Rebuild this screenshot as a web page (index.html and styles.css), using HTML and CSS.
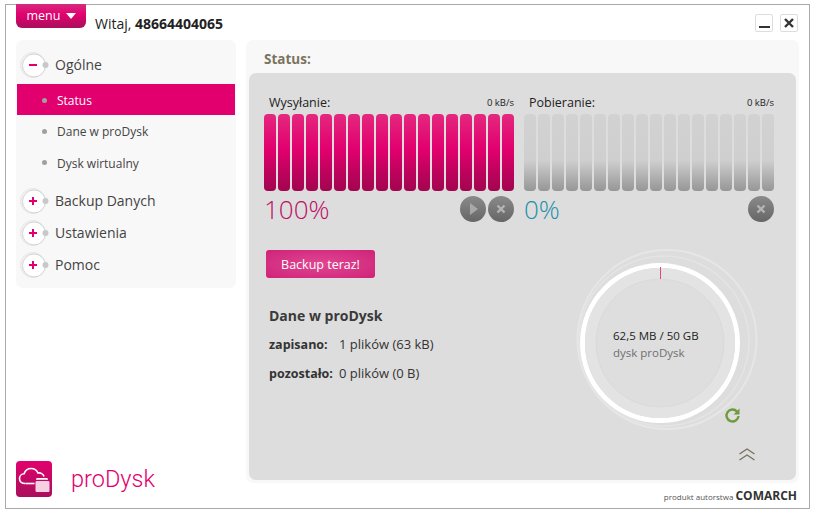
FILE: index.html
```html
<!DOCTYPE html>
<html lang="pl">
<head>
    <meta charset="UTF-8">
    <title>proDysk</title>
    <link rel="stylesheet" href="styles.css">
</head>
<body>
    <svg class="defs" width="0" height="0">
        <symbol id="node" viewBox="0 0 30 30">
            <circle cx="14" cy="15" r="12.5" fill="#f2f2f2" stroke="#e6e6e6"/>
            <circle cx="15" cy="15.5" r="11.5" fill="#fff" stroke="#d4d4d4"/>
            <circle cx="26.5" cy="15" r="3" fill="#c8c8c8"/>
        </symbol>
    </svg>

    <div class="window">
        <div class="topbar">
            <button class="menu-btn">menu <span class="caret"></span></button>
            <div class="hello">Witaj, <b>48664404065</b></div>
            <div class="win-btns">
                <div class="win-btn"><span class="min-mark"></span></div>
                <div class="win-btn close-btn">
                    <svg width="10" height="10" viewBox="0 0 10 10"><path d="M1 1l8 8M9 1l-8 8" stroke="#333" stroke-width="2.4"/></svg>
                </div>
            </div>
        </div>

        <div class="content">
            <div class="left">
                <div class="sidebar">
                    <div class="group">
                        <svg class="node"><use href="#node"/></svg>
                        <span class="sign minus"></span>
                        Ogólne
                    </div>
                    <div class="sub active">Status</div>
                    <div class="sub">Dane w proDysk</div>
                    <div class="sub">Dysk wirtualny</div>
                    <div class="group first-closed">
                        <svg class="node"><use href="#node"/></svg>
                        <span class="sign plus"></span>
                        Backup Danych
                    </div>
                    <div class="group">
                        <svg class="node"><use href="#node"/></svg>
                        <span class="sign plus"></span>
                        Ustawienia
                    </div>
                    <div class="group">
                        <svg class="node"><use href="#node"/></svg>
                        <span class="sign plus"></span>
                        Pomoc
                    </div>
                </div>

                <div class="brand">
                    <div class="logo">
                        <svg width="36" height="36" viewBox="0 0 36 36">
                            <path d="M9.500 22.500c-4 0-6-2-6-5 0-2.600 2-4.600 4.600-4.700 1-3.300 3.700-5.300 7-5.300 3.200 0 5.700 1.800 6.900 4.500 2.600-.4 5.300.9 6 3.500" fill="none" stroke="#fff" stroke-width="1.600"/>
                            <path d="M9.500 22.500h9" stroke="#fff" stroke-width="1.600"/>
                            <path d="M21 20h11c1 0 1.500.5 1.500 1.500v8c0 1-.5 1.500-1.500 1.500h-11c-1 0-1.500-.5-1.500-1.500v-8c0-1 .5-1.500 1.500-1.500z" fill="#f6cfe2"/>
                            <path d="M21.500 17h9c1 0 1.500.5 1.500 1.800h-12c0-1.300.5-1.800 1.500-1.800z" fill="#fff"/>
                        </svg>
                    </div>
                    <span class="brand-name">proDysk</span>
                </div>
            </div>

            <div class="main">
                <div class="panel">
                    <div class="panel-title">Status:</div>
                    <div class="inner">
                        <div class="meters">
                            <div class="meter">
                                <div class="meter-head"><span>Wysyłanie:</span><small>0 kB/s</small></div>
                                <div class="bars on">
                                    <i></i><i></i><i></i><i></i><i></i><i></i><i></i><i></i><i></i>
                                    <i></i><i></i><i></i><i></i><i></i><i></i><i></i><i></i><i></i>
                                </div>
                                <div class="meter-foot">
                                    <span class="pct pink">100%</span>
                                    <div class="round-btns">
                                        <div class="round-btn"><svg width="26" height="26" viewBox="0 0 26 26"><path d="M10 7l8 6-8 6z" fill="#a8a8a8"/></svg></div>
                                        <div class="round-btn"><svg width="26" height="26" viewBox="0 0 26 26"><path d="M9.500 9.500l7 7M16.500 9.500l-7 7" stroke="#b4b4b4" stroke-width="2.400"/></svg></div>
                                    </div>
                                </div>
                            </div>
                            <div class="meter">
                                <div class="meter-head"><span>Pobieranie:</span><small>0 kB/s</small></div>
                                <div class="bars">
                                    <i></i><i></i><i></i><i></i><i></i><i></i><i></i><i></i><i></i>
                                    <i></i><i></i><i></i><i></i><i></i><i></i><i></i><i></i><i></i>
                                </div>
                                <div class="meter-foot">
                                    <span class="pct teal">0%</span>
                                    <div class="round-btns">
                                        <div class="round-btn"><svg width="26" height="26" viewBox="0 0 26 26"><path d="M9.500 9.500l7 7M16.500 9.500l-7 7" stroke="#b4b4b4" stroke-width="2.400"/></svg></div>
                                    </div>
                                </div>
                            </div>
                        </div>

                        <div class="lower">
                            <div class="info">
                                <button class="backup-btn">Backup teraz!</button>
                                <h2>Dane w proDysk</h2>
                                <div class="info-row"><b>zapisano:</b><span>1 plików (63 kB)</span></div>
                                <div class="info-row"><b>pozostało:</b><span>0 plików (0 B)</span></div>
                            </div>
                            <div class="disk">
                                <svg width="200" height="220" viewBox="0 0 200 220">
                                    <circle cx="97" cy="93.500" r="89.500" fill="none" stroke="#e6e6e6" stroke-width="2"/>
                                    <circle cx="94" cy="95" r="85" fill="none" stroke="#e4e4e4" stroke-width="1.500"/>
                                    <circle cx="90" cy="97" r="77.500" fill="none" stroke="#fff" stroke-width="5"/>
                                    <circle cx="90" cy="97" r="69.500" fill="none" stroke="#e3e3e3" stroke-width="11"/>
                                    <circle cx="90" cy="97" r="64" fill="#dedede" stroke="#dadada"/>
                                    <path d="M90.500 21v12" stroke="#e8428f" stroke-width="1"/>
                                    <path d="M168.500 170a6 6 0 1 1-1.500-4.500" fill="none" stroke="#6f9a3e" stroke-width="2.400"/>
                                    <path d="M169.500 162.500v6h-6z" fill="#6f9a3e"/>
                                    <path d="M169.500 208l7.500-5 7.500 5M169.500 214l7.500-5 7.500 5" fill="none" stroke="#77705f" stroke-width="1.300"/>
                                </svg>
                                <div class="disk-text">
                                    <div>62,5 MB / 50 GB</div>
                                    <div class="disk-name">dysk proDysk</div>
                                </div>
                            </div>
                        </div>
                    </div>
                </div>
                <div class="credit">produkt autorstwa <b>COMARCH</b></div>
            </div>
        </div>
    </div>
</body>
</html>
```

FILE: styles.css
```css
* {
    box-sizing: border-box;
}

body {
    margin: 0;
    background: #fff;
    color: #333;
    font-family: "Open Sans", "Noto Sans", sans-serif;
}

.defs {
    position: absolute;
}

.window {
    width: 805px;
    height: 505px;
    margin: 4px 0 0 5px;
    padding: 0 10px;
    border: 1px solid #aaa;
    background: #fff;
    display: flex;
    flex-direction: column;
}

/* top bar */
.topbar {
    height: 35px;
    flex: none;
    display: flex;
    align-items: flex-start;
}

.menu-btn {
    width: 70px;
    height: 24px;
    margin-top: -1px;
    padding: 0 0 1px;
    border: none;
    border-radius: 0 0 6px 6px;
    background: linear-gradient(#d62a80, #e2006e 45%, #a8105c);
    color: #fff;
    font-family: inherit;
    font-size: 12.5px;
}

.caret {
    display: inline-block;
    margin: 0 0 1px 2px;
    border-left: 5px solid transparent;
    border-right: 5px solid transparent;
    border-top: 6px solid #fff;
}

.hello {
    margin: 10px 0 0 9px;
    font-size: 14px;
    line-height: 18px;
    color: #222;
}

.win-btns {
    margin: 9px 1px 0 auto;
    display: flex;
    gap: 7px;
}

.win-btn {
    width: 18px;
    height: 18px;
    border: 1px solid #ddd;
    border-radius: 2px;
    background: #fff;
    display: flex;
    align-items: flex-end;
    justify-content: center;
}

.close-btn {
    align-items: center;
}

.min-mark {
    width: 11px;
    height: 2px;
    margin-bottom: 3px;
    background: #333;
}

.content {
    flex: 1;
    display: flex;
    gap: 10px;
}

/* left column */
.left {
    width: 220px;
    display: flex;
    flex-direction: column;
}

.sidebar {
    height: 248px;
    padding: 9px 1px 0;
    border-radius: 7px;
    background: #f8f8f8;
}

.group {
    position: relative;
    height: 32px;
    padding-left: 38px;
    font-size: 14px;
    line-height: 32px;
    color: #444;
}

.first-closed {
    margin-top: 7px;
}

.node {
    position: absolute;
    left: 2px;
    top: 1px;
    width: 30px;
    height: 30px;
}

.sign {
    position: absolute;
    left: 12px;
    top: 15px;
    width: 8px;
    height: 2px;
    background: #e2006e;
}

.plus::after {
    content: "";
    position: absolute;
    left: 3px;
    top: -3px;
    width: 2px;
    height: 8px;
    background: #e2006e;
}

.sub {
    position: relative;
    height: 31.33px;
    padding-left: 40px;
    font-size: 12px;
    line-height: 33px;
    color: #444;
}

.group + .sub {
    margin-top: 3px;
}

.sub::before {
    content: "";
    position: absolute;
    left: 25px;
    top: 13.5px;
    width: 5px;
    height: 5px;
    border-radius: 50%;
    background: #a0a0a0;
}

.sub.active {
    background: #e2006e;
    color: #fff;
}

.brand {
    margin-top: auto;
    margin-bottom: 11px;
    display: flex;
    align-items: center;
    gap: 19px;
}

.logo {
    width: 36px;
    height: 36px;
    border-radius: 4px;
    background: linear-gradient(#e2006e, #a8105c);
}

.logo svg {
    display: block;
}

.brand-name {
    font-family: Roboto, "Open Sans", sans-serif;
    font-weight: 300;
    font-size: 23.5px;
    color: #e2006e;
}

/* main column */
.main {
    width: 553px;
    display: flex;
    flex-direction: column;
}

.panel {
    height: 443px;
    padding: 0 3px 3px;
    border-radius: 7px;
    background: #f8f8f8;
    display: flex;
    flex-direction: column;
}

.panel-title {
    height: 33px;
    padding: 9px 0 0 15px;
    font-size: 13.5px;
    font-weight: 700;
    line-height: 20px;
    color: #7b7360;
}

.inner {
    flex: 1;
    padding: 21px 22px 0 15px;
    border-radius: 7px;
    background: #ddd;
}

.meters {
    display: flex;
    gap: 10px;
}

.meter {
    width: 250px;
}

.meter-head {
    height: 20px;
    padding: 0 0 4px 5px;
    display: flex;
    justify-content: space-between;
    align-items: center;
    font-size: 12.5px;
    color: #222;
}

.meter-head small {
    font-size: 9.5px;
}

.bars {
    display: flex;
    gap: 2px;
    height: 77px;
}

.bars i {
    width: 12px;
    border-radius: 4px;
    background: linear-gradient(#d2d2d2, #cfcfcf 60%, #969696);
}

.bars.on i {
    background: linear-gradient(#e4287f, #e2006e 45%, #a1054f);
}

.meter-foot {
    margin-top: 5px;
    display: flex;
    justify-content: space-between;
    align-items: flex-start;
}

.pct {
    font-size: 26px;
    font-weight: 300;
    line-height: 26px;
}

.pink {
    color: #bd0e66;
}

.teal {
    color: #1d90aa;
}

.round-btns {
    display: flex;
    gap: 2px;
}

.round-btn {
    width: 26px;
    height: 26px;
    border-radius: 50%;
    background: linear-gradient(#8a8a8a, #666);
}

.round-btn svg {
    display: block;
}

.lower {
    display: flex;
    justify-content: space-between;
}

.info {
    padding: 28px 0 0 2px;
}

.backup-btn {
    display: block;
    width: 109px;
    height: 28px;
    padding: 0;
    border: none;
    border-radius: 3px;
    background: radial-gradient(ellipse at center, #e04792, #cf2378);
    color: #fff;
    font-family: inherit;
    font-size: 12.5px;
}

.info h2 {
    margin: 27px 0 0 3px;
    font-size: 14px;
    line-height: 22px;
    color: #3a3a3a;
}

.info-row {
    margin: 6px 0 0 3px;
    display: flex;
    align-items: baseline;
    font-size: 13px;
    line-height: 22px;
    color: #333;
}

.info-row b {
    width: 70px;
    font-size: 12.5px;
}

.disk {
    position: relative;
    width: 200px;
    height: 220px;
    margin: 24px 4px 0 0;
    flex: none;
}

.disk-text {
    position: absolute;
    left: 0;
    top: 81px;
    width: 180px;
    padding-left: 43px;
    font-size: 11.5px;
    line-height: 17px;
    color: #222;
}

.disk-name {
    color: #6f6f6f;
}

.credit {
    margin-top: 5px;
    font-size: 8px;
    line-height: 16px;
    text-align: right;
    padding-right: 2px;
    color: #555;
}

.credit b {
    font-size: 12px;
    color: #333;
}
```
